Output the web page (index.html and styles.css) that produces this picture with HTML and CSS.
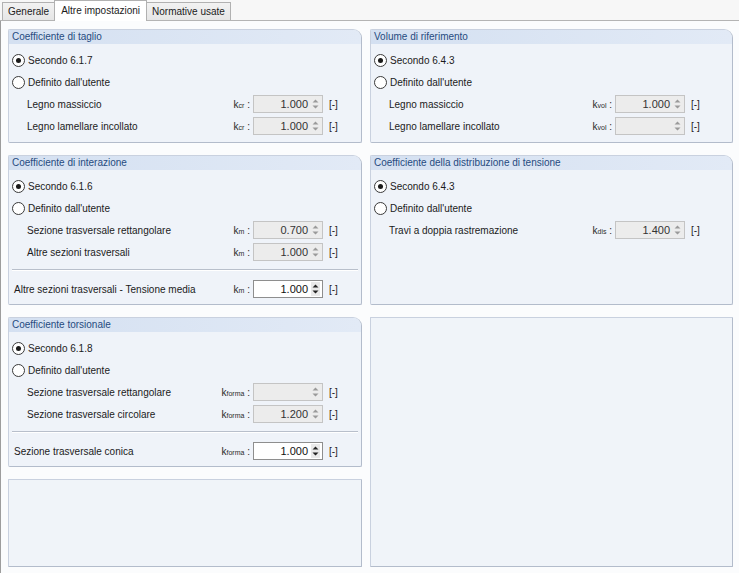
FILE: index.html
```html
<!DOCTYPE html>
<html>
<head>
<meta charset="utf-8">
<link rel="stylesheet" href="styles.css">
</head>
<body>
<div class="tabs">
  <div class="tab">Generale</div>
  <div class="tab active">Altre impostazioni</div>
  <div class="tab">Normative usate</div>
</div>
<div class="page">
  <div class="col col-left">
    <section class="group h114">
      <div class="ghead">Coefficiente di taglio</div>
      <div class="gbody">
        <div class="radio"><span class="circle on"></span>Secondo 6.1.7</div>
        <div class="radio"><span class="circle"></span>Definito dall'utente</div>
        <div class="row"><span class="name">Legno massiccio</span><span class="sym">k<small>cr</small> :</span><span class="spin dis"><span class="val">1.000</span><svg class="arr" viewBox="0 0 9 14"><path d="M1.5 5.5 4.5 2.5 7.5 5.5Z M1.5 8.5 4.5 11.5 7.5 8.5Z"/></svg></span><span class="unit">[-]</span></div>
        <div class="row"><span class="name">Legno lamellare incollato</span><span class="sym">k<small>cr</small> :</span><span class="spin dis"><span class="val">1.000</span><svg class="arr" viewBox="0 0 9 14"><path d="M1.5 5.5 4.5 2.5 7.5 5.5Z M1.5 8.5 4.5 11.5 7.5 8.5Z"/></svg></span><span class="unit">[-]</span></div>
      </div>
    </section>
    <section class="group h150">
      <div class="ghead">Coefficiente di interazione</div>
      <div class="gbody">
        <div class="radio"><span class="circle on"></span>Secondo 6.1.6</div>
        <div class="radio"><span class="circle"></span>Definito dall'utente</div>
        <div class="row"><span class="name">Sezione trasversale rettangolare</span><span class="sym">k<small>m</small> :</span><span class="spin dis"><span class="val">0.700</span><svg class="arr" viewBox="0 0 9 14"><path d="M1.5 5.5 4.5 2.5 7.5 5.5Z M1.5 8.5 4.5 11.5 7.5 8.5Z"/></svg></span><span class="unit">[-]</span></div>
        <div class="row"><span class="name">Altre sezioni trasversali</span><span class="sym">k<small>m</small> :</span><span class="spin dis"><span class="val">1.000</span><svg class="arr" viewBox="0 0 9 14"><path d="M1.5 5.5 4.5 2.5 7.5 5.5Z M1.5 8.5 4.5 11.5 7.5 8.5Z"/></svg></span><span class="unit">[-]</span></div>
        <div class="sep"></div>
        <div class="row plain"><span class="name">Altre sezioni trasversali - Tensione media</span><span class="sym">k<small>m</small> :</span><span class="spin en"><span class="val">1.000</span><svg class="arr" viewBox="0 0 9 14"><path d="M1.5 5.5 4.5 2.5 7.5 5.5Z M1.5 8.5 4.5 11.5 7.5 8.5Z"/></svg></span><span class="unit">[-]</span></div>
      </div>
    </section>
    <section class="group h150">
      <div class="ghead">Coefficiente torsionale</div>
      <div class="gbody">
        <div class="radio"><span class="circle on"></span>Secondo 6.1.8</div>
        <div class="radio"><span class="circle"></span>Definito dall'utente</div>
        <div class="row"><span class="name">Sezione trasversale rettangolare</span><span class="sym">k<small>forma</small> :</span><span class="spin dis"><span class="val"></span><svg class="arr" viewBox="0 0 9 14"><path d="M1.5 5.5 4.5 2.5 7.5 5.5Z M1.5 8.5 4.5 11.5 7.5 8.5Z"/></svg></span><span class="unit">[-]</span></div>
        <div class="row"><span class="name">Sezione trasversale circolare</span><span class="sym">k<small>forma</small> :</span><span class="spin dis"><span class="val">1.200</span><svg class="arr" viewBox="0 0 9 14"><path d="M1.5 5.5 4.5 2.5 7.5 5.5Z M1.5 8.5 4.5 11.5 7.5 8.5Z"/></svg></span><span class="unit">[-]</span></div>
        <div class="sep"></div>
        <div class="row plain"><span class="name">Sezione trasversale conica</span><span class="sym">k<small>forma</small> :</span><span class="spin en"><span class="val">1.000</span><svg class="arr" viewBox="0 0 9 14"><path d="M1.5 5.5 4.5 2.5 7.5 5.5Z M1.5 8.5 4.5 11.5 7.5 8.5Z"/></svg></span><span class="unit">[-]</span></div>
      </div>
    </section>
    <section class="group empty h88"></section>
  </div>
  <div class="col col-right">
    <section class="group h114">
      <div class="ghead">Volume di riferimento</div>
      <div class="gbody">
        <div class="radio"><span class="circle on"></span>Secondo 6.4.3</div>
        <div class="radio"><span class="circle"></span>Definito dall'utente</div>
        <div class="row"><span class="name">Legno massiccio</span><span class="sym">k<small>vol</small> :</span><span class="spin dis"><span class="val">1.000</span><svg class="arr" viewBox="0 0 9 14"><path d="M1.5 5.5 4.5 2.5 7.5 5.5Z M1.5 8.5 4.5 11.5 7.5 8.5Z"/></svg></span><span class="unit">[-]</span></div>
        <div class="row"><span class="name">Legno lamellare incollato</span><span class="sym">k<small>vol</small> :</span><span class="spin dis"><span class="val"></span><svg class="arr" viewBox="0 0 9 14"><path d="M1.5 5.5 4.5 2.5 7.5 5.5Z M1.5 8.5 4.5 11.5 7.5 8.5Z"/></svg></span><span class="unit">[-]</span></div>
      </div>
    </section>
    <section class="group h150">
      <div class="ghead">Coefficiente della distribuzione di tensione</div>
      <div class="gbody">
        <div class="radio"><span class="circle on"></span>Secondo 6.4.3</div>
        <div class="radio"><span class="circle"></span>Definito dall'utente</div>
        <div class="row"><span class="name">Travi a doppia rastremazione</span><span class="sym">k<small>dis</small> :</span><span class="spin dis"><span class="val">1.400</span><svg class="arr" viewBox="0 0 9 14"><path d="M1.5 5.5 4.5 2.5 7.5 5.5Z M1.5 8.5 4.5 11.5 7.5 8.5Z"/></svg></span><span class="unit">[-]</span></div>
      </div>
    </section>
    <section class="group empty grow"></section>
  </div>
</div>
</body>
</html>
```

FILE: styles.css
```css
* { box-sizing: border-box; }
html, body { margin: 0; padding: 0; }
body {
  width: 739px;
  height: 573px;
  overflow: hidden;
  background: #f7f7f7;
  font-family: "Liberation Sans", Arial, sans-serif;
  font-size: 10px;
  color: #1b1b1b;
}
.tabs {
  display: flex;
  align-items: flex-end;
  height: 21px;
  padding-left: 2px;
  border-bottom: 1px solid #b4b4b4;
}
.tab {
  height: 18px;
  line-height: 17px;
  padding: 0 5px;
  border: 1px solid #b1b1b1;
  border-bottom: none;
  background: linear-gradient(#f2f2f2, #e6e6e6);
  margin-right: -1px;
}
.tab.active {
  height: 21px;
  line-height: 20px;
  padding: 0 6px;
  margin-bottom: -1px;
  background: #ffffff;
  position: relative;
  z-index: 1;
}
.page {
  display: flex;
  gap: 8px;
  height: 552px;
  padding: 8px 6px 6px 7px;
  background: #fbfcfd;
  border-left: 1px solid #9d9d9d;
}
.col {
  display: flex;
  flex-direction: column;
  gap: 12px;
}
.col-left { width: 354px; }
.col-right { width: 363px; }
.group {
  border: 1px solid #c9d1df;
  border-right-color: #b3bccb;
  border-bottom-color: #b3bccb;
  border-radius: 2px 9px 2px 2px;
  background: #eff3f9;
  overflow: hidden;
}
.group.empty {
  border-radius: 1px;
  background: #f0f4f9;
}
.h114 { height: 114px; }
.h150 { height: 150px; }
.h88 { height: 88px; }
.grow { flex: 1; }
.ghead {
  height: 14px;
  line-height: 13px;
  padding-left: 3px;
  background: linear-gradient(to right, #d4e0f1, #e2eaf6);
  color: #264b80;
}
.gbody { padding-top: 5px; }
.radio {
  display: flex;
  align-items: center;
  height: 22px;
  padding-left: 3px;
}
.circle {
  width: 13px;
  height: 13px;
  border: 1px solid #3a3a3a;
  border-radius: 50%;
  background: #fff;
  margin-right: 3px;
  position: relative;
  flex: none;
}
.circle.on::after {
  content: "";
  position: absolute;
  left: 3px;
  top: 3px;
  width: 5px;
  height: 5px;
  border-radius: 50%;
  background: #1a1a1a;
}
.row {
  display: flex;
  align-items: center;
  height: 22px;
  padding-left: 18px;
}
.row.plain { padding-left: 5px; }
.name { width: 190px; white-space: nowrap; }
.row.plain .name { width: 203px; }
.sym {
  width: 33px;
  text-align: right;
  white-space: nowrap;
  color: #2a2a2a;
}
.sym small { font-size: 7px; }
.spin {
  display: flex;
  align-items: center;
  justify-content: flex-end;
  margin-left: 3px;
  width: 70px;
  height: 18px;
  border: 1px solid #c4c4c4;
  background: #ececec;
}
.spin.en {
  background: #ffffff;
  border-color: #8e8e8e;
}
.val { padding-right: 3px; font-size: 11px; color: #333; }
.spin.en .val { color: #111; }
.arr {
  width: 9px;
  height: 14px;
  margin-right: 2px;
  fill: #9a9a9a;
}
.spin.en .arr {
  fill: #222;
  background: #e9e9e9;
}
.unit { margin-left: 6px; }
.sep {
  height: 2px;
  margin: 6px 3px 7px 3px;
  border-top: 1px solid #b8bfcb;
  border-bottom: 1px solid #ffffff;
}
```
